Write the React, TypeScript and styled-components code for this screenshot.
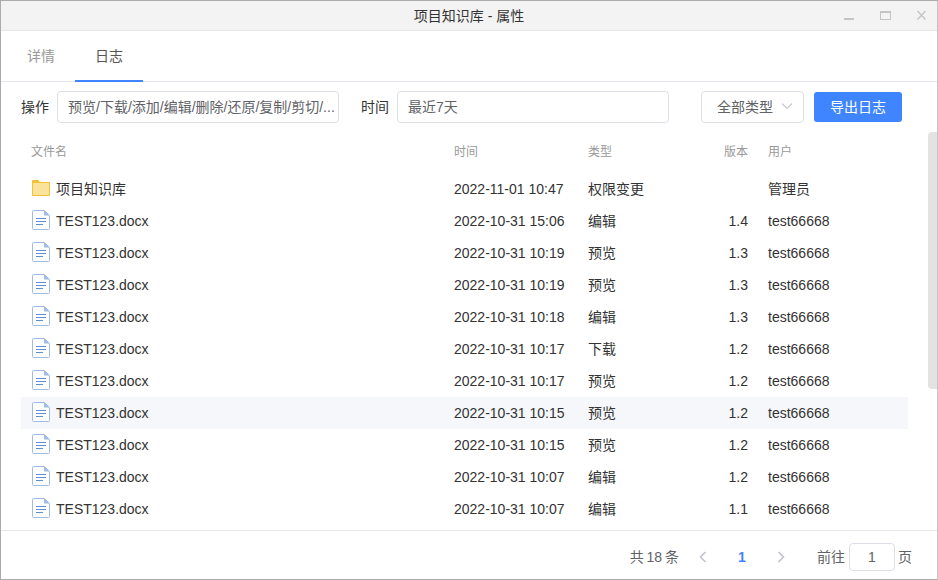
import React from 'react';
import styled, { createGlobalStyle } from 'styled-components';

const GlobalStyle = createGlobalStyle`
  html, body { margin: 0; padding: 0; background: #fff; }
  body { font-family: "Liberation Sans", "Noto Sans CJK SC", sans-serif; }
  * { box-sizing: border-box; }
`;

const Window = styled.div`
  position: relative;
  width: 938px;
  height: 580px;
  display: flex;
  flex-direction: column;
  border: 1px solid #ababab;
  border-right-color: #c4c4c4;
  background: #fff;
  overflow: hidden;
  color: #333;
  font-size: 14px;
`;

const TitleBar = styled.div`
  position: relative;
  flex: none;
  height: 30px;
  padding-bottom: 2px;
  background: #f3f3f3;
  border-bottom: 1px solid #e6e6e6;
  display: flex;
  align-items: center;
  justify-content: center;
  font-size: 14px;
  color: #333;
`;

const WindowControls = styled.div`
  position: absolute;
  right: 9px;
  top: 8px;
  display: flex;
  gap: 24px;
  align-items: flex-start;
`;

const Tabs = styled.div`
  flex: none;
  height: 51px;
  display: flex;
  padding-left: 6px;
  border-bottom: 1px solid #e4e7ed;
`;

const Tab = styled.div<{ $active?: boolean }>`
  width: 68px;
  height: 51px;
  display: flex;
  align-items: center;
  justify-content: center;
  padding-bottom: 1px;
  font-size: 14px;
  color: ${({ $active }) => ($active ? '#555' : '#999')};
  border-bottom: 2px solid ${({ $active }) => ($active ? '#3f85ff' : 'transparent')};
`;

const Toolbar = styled.div`
  flex: none;
  height: 32px;
  margin-top: 9px;
  padding: 0 35px 0 20px;
  display: flex;
  align-items: center;
`;

const FieldLabel = styled.label`
  flex: none;
  width: 36px;
  padding-bottom: 2px;
  font-size: 14px;
  color: #333;
`;

const TextField = styled.div<{ $width: number }>`
  flex: none;
  width: ${({ $width }) => $width}px;
  height: 32px;
  padding: 0 10px 2px;
  display: flex;
  align-items: center;
  border: 1px solid #dcdfe6;
  border-radius: 4px;
  font-size: 14px;
  color: #606266;
  white-space: nowrap;
  overflow: hidden;
`;

const FieldGroup = styled.div`
  display: flex;
  align-items: center;
  margin-right: 22px;
`;

const TypeSelect = styled.div`
  flex: none;
  width: 103px;
  height: 32px;
  margin-left: 10px;
  padding: 0 0 2px 15px;
  display: flex;
  align-items: center;
  gap: 8px;
  border: 1px solid #dcdfe6;
  border-radius: 4px;
  color: #606266;
  font-size: 14px;
`;

const ExportButton = styled.button`
  flex: none;
  width: 88px;
  height: 30px;
  margin-left: 10px;
  padding: 0 0 2px;
  border: 0;
  border-radius: 3px;
  background: #3f85ff;
  color: #fff;
  font: inherit;
  font-size: 14px;
`;

const Spacer = styled.div`
  flex: 1;
`;

const Table = styled.div`
  flex: 1;
  min-height: 0;
  padding: 0 29px 0 20px;
  overflow: hidden;
`;

const columns = `
  display: grid;
  grid-template-columns: 423px 134px 100px 60px 140px;
  align-items: center;
`;

const HeaderRow = styled.div`
  ${columns}
  height: 50px;
  padding: 5px 0 0 10px;
  font-size: 12px;
  color: #999;
`;

const Row = styled.div<{ $hover?: boolean }>`
  ${columns}
  height: 32px;
  padding-left: 10px;
  font-size: 14px;
  color: #333;
  background: ${({ $hover }) => ($hover ? '#f5f7fa' : 'transparent')};
`;

const NameCell = styled.div`
  display: flex;
  align-items: center;
  gap: 6px;
  padding-left: 1px;
  svg { margin-bottom: 2px; }
`;

const NameText = styled.span<{ $cjk?: boolean }>`
  padding-bottom: ${({ $cjk }) => ($cjk ? '2px' : '0')};
`;

const TypeCell = styled.div`
  padding-bottom: 2px;
`;

const VersionCell = styled.div`
  text-align: right;
`;

const UserCell = styled.div<{ $cjk?: boolean }>`
  padding-left: 20px;
  padding-bottom: ${({ $cjk }) => ($cjk ? '2px' : '0')};
`;

const Scrollbar = styled.div`
  position: absolute;
  right: 0;
  top: 131px;
  width: 9px;
  height: 257px;
  border-radius: 4px 0 0 4px;
  background: #e3e3e3;
`;

const Footer = styled.div`
  flex: none;
  height: 49px;
  padding: 4px 25px 0 0;
  border-top: 1px solid #e8e8e8;
  display: flex;
  align-items: center;
  justify-content: flex-end;
  font-size: 14px;
  color: #606266;
`;

const Total = styled.span`
  margin-right: 18px;
  padding-bottom: 2px;
  word-spacing: -1px;
`;

const PageArrow = styled.span`
  display: flex;
  width: 12px;
  justify-content: center;
`;

const PageNumber = styled.span`
  width: 66px;
  padding-bottom: 1px;
  text-align: center;
  font-weight: 700;
  color: #3f85ff;
`;

const JumpLabel = styled.span`
  margin-left: 30px;
  padding-bottom: 2px;
`;

const PageInput = styled.div`
  width: 46px;
  height: 28px;
  margin: 0 3px 0 4px;
  padding-bottom: 1px;
  display: flex;
  align-items: center;
  justify-content: center;
  border: 1px solid #dcdfe6;
  border-radius: 4px;
`;

const PageSuffix = styled.span`
  padding-bottom: 2px;
`;

const FolderIcon = () => (
  <svg width="18" height="16" viewBox="0 0 18 16">
    <path d="M0 1a1 1 0 0 1 1-1h5l2 2h9a1 1 0 0 1 1 1v12a1 1 0 0 1-1 1H1a1 1 0 0 1-1-1z" fill="#f1c232" />
    <rect x="1" y="3" width="16" height="12" fill="#fbe29c" />
  </svg>
);

const DocIcon = () => (
  <svg width="18" height="20" viewBox="0 0 18 20" fill="none">
    <path d="M1.500.5h11l5 5v13a1 1 0 0 1-1 1h-15a1 1 0 0 1-1-1v-17a1 1 0 0 1 1-1z" fill="#fff" stroke="#9dbde6" />
    <path d="M12 0.500v5h5.500z" fill="#9dbde6" />
    <path d="M4 8.500h10M4 11.500h10M4 14.500h7" stroke="#5f8fd0" />
  </svg>
);

const ChevronDown = () => (
  <svg width="12" height="8" viewBox="0 0 12 8" fill="none">
    <path d="M1 1.500l5 5 5-5" stroke="#c8cad0" strokeWidth="1.200" />
  </svg>
);

const PageChevron = ({ dir }: { dir: 'left' | 'right' }) => (
  <svg width="8" height="12" viewBox="0 0 8 12" fill="none">
    <path d={dir === 'left' ? 'M6.500 1L1.500 6l5 5' : 'M1.500 1l5 5-5 5'} stroke="#c0c4cc" strokeWidth="1.600" />
  </svg>
);

const rows = [
  { name: '项目知识库', time: '2022-11-01 10:47', type: '权限变更', version: '', user: '管理员', folder: true },
  { name: 'TEST123.docx', time: '2022-10-31 15:06', type: '编辑', version: '1.4', user: 'test66668' },
  { name: 'TEST123.docx', time: '2022-10-31 10:19', type: '预览', version: '1.3', user: 'test66668' },
  { name: 'TEST123.docx', time: '2022-10-31 10:19', type: '预览', version: '1.3', user: 'test66668' },
  { name: 'TEST123.docx', time: '2022-10-31 10:18', type: '编辑', version: '1.3', user: 'test66668' },
  { name: 'TEST123.docx', time: '2022-10-31 10:17', type: '下载', version: '1.2', user: 'test66668' },
  { name: 'TEST123.docx', time: '2022-10-31 10:17', type: '预览', version: '1.2', user: 'test66668' },
  { name: 'TEST123.docx', time: '2022-10-31 10:15', type: '预览', version: '1.2', user: 'test66668', hover: true },
  { name: 'TEST123.docx', time: '2022-10-31 10:15', type: '预览', version: '1.2', user: 'test66668' },
  { name: 'TEST123.docx', time: '2022-10-31 10:07', type: '编辑', version: '1.2', user: 'test66668' },
  { name: 'TEST123.docx', time: '2022-10-31 10:07', type: '编辑', version: '1.1', user: 'test66668' },
];

export default function App() {
  return (
    <>
      <GlobalStyle />
      <Window>
        <TitleBar>
          项目知识库 - 属性
          <WindowControls>
            <svg width="12" height="12" viewBox="0 0 12 12" fill="none">
              <path d="M1 10h10" stroke="#c4c4c4" strokeWidth="2" />
            </svg>
            <svg width="13" height="12" viewBox="0 0 13 12" fill="none">
              <rect x="1.500" y="3.500" width="10" height="7" stroke="#c4c4c4" />
              <path d="M1 3h11" stroke="#c4c4c4" strokeWidth="2" />
            </svg>
            <svg width="12" height="12" viewBox="0 0 12 12" fill="none">
              <path d="M1.500 2l8 8.500M9.500 2l-8 8.500" stroke="#c4c4c4" strokeWidth="1.300" />
            </svg>
          </WindowControls>
        </TitleBar>
        <Tabs>
          <Tab>详情</Tab>
          <Tab $active>日志</Tab>
        </Tabs>
        <Toolbar>
          <FieldGroup>
            <FieldLabel>操作</FieldLabel>
            <TextField $width={282}>预览/下载/添加/编辑/删除/还原/复制/剪切/...</TextField>
          </FieldGroup>
          <FieldGroup>
            <FieldLabel>时间</FieldLabel>
            <TextField $width={272}>最近7天</TextField>
          </FieldGroup>
          <Spacer />
          <TypeSelect>
            全部类型
            <ChevronDown />
          </TypeSelect>
          <ExportButton>导出日志</ExportButton>
        </Toolbar>
        <Table>
          <HeaderRow>
            <div>文件名</div>
            <div>时间</div>
            <div>类型</div>
            <VersionCell>版本</VersionCell>
            <UserCell>用户</UserCell>
          </HeaderRow>
          {rows.map((row, i) => (
            <Row key={i} $hover={row.hover}>
              <NameCell>
                {row.folder ? <FolderIcon /> : <DocIcon />}
                <NameText $cjk={row.folder}>{row.name}</NameText>
              </NameCell>
              <div>{row.time}</div>
              <TypeCell>{row.type}</TypeCell>
              <VersionCell>{row.version}</VersionCell>
              <UserCell $cjk={row.folder}>{row.user}</UserCell>
            </Row>
          ))}
        </Table>
        <Scrollbar />
        <Footer>
          <Total>共 18 条</Total>
          <PageArrow>
            <PageChevron dir="left" />
          </PageArrow>
          <PageNumber>1</PageNumber>
          <PageArrow>
            <PageChevron dir="right" />
          </PageArrow>
          <JumpLabel>前往</JumpLabel>
          <PageInput>1</PageInput>
          <PageSuffix>页</PageSuffix>
        </Footer>
      </Window>
    </>
  );
}
